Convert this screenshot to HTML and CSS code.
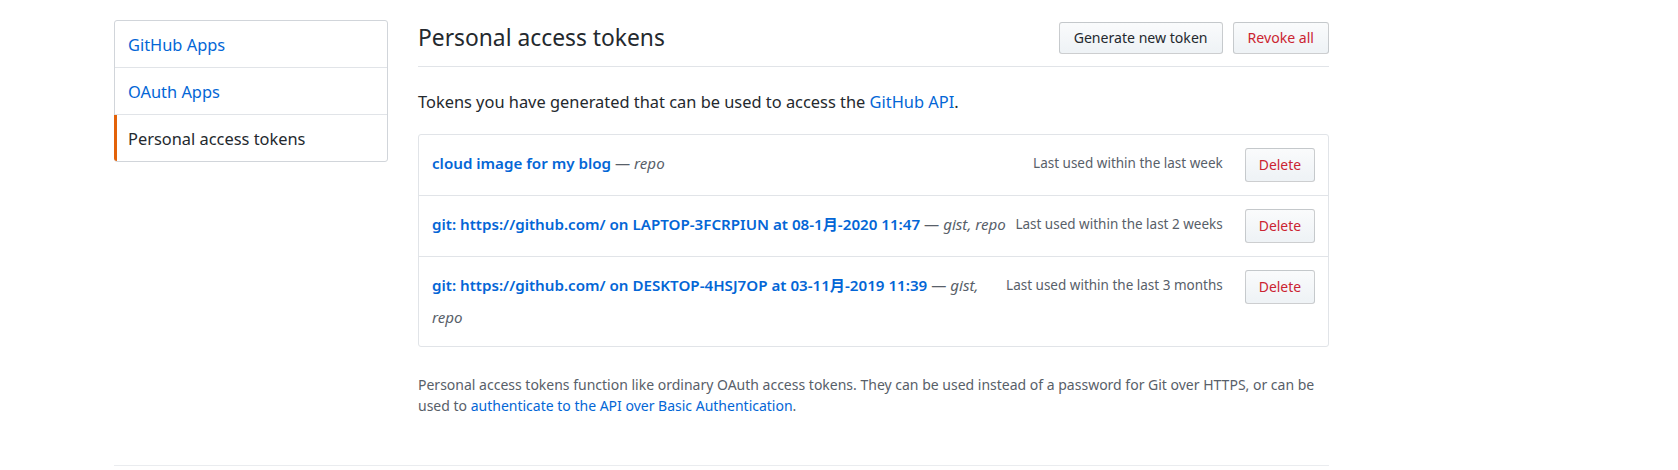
FILE: index.html
```html
<!DOCTYPE html>
<html lang="en">
<head>
<meta charset="utf-8">
<title>Personal access tokens</title>
<link rel="stylesheet" href="styles.css">
</head>
<body>
<div class="page">
  <div class="layout">
    <nav class="menu">
      <a class="menu-item" href="#">GitHub Apps</a>
      <a class="menu-item" href="#">OAuth Apps</a>
      <a class="menu-item selected" href="#">Personal access tokens</a>
    </nav>
    <main class="content">
      <div class="subhead">
        <h2 class="subhead-title">Personal access tokens</h2>
        <div class="subhead-actions">
          <button class="btn">Generate new token</button>
          <button class="btn btn-danger">Revoke all</button>
        </div>
      </div>
      <p class="intro">Tokens you have generated that can be used to access the <a href="#">GitHub API</a>.</p>
      <div class="token-list">
        <div class="token">
          <div class="token-desc"><a class="token-name" href="#">cloud image for my blog</a> <span class="token-scope">— <em>repo</em></span></div>
          <span class="token-used">Last used within the last week</span>
          <button class="btn btn-danger btn-delete">Delete</button>
        </div>
        <div class="token">
          <div class="token-desc"><a class="token-name" href="#">git: https://github.com/ on LAPTOP-3FCRPIUN at 08-1月-2020 11:47</a> <span class="token-scope">— <em>gist, repo</em></span></div>
          <span class="token-used">Last used within the last 2 weeks</span>
          <button class="btn btn-danger btn-delete">Delete</button>
        </div>
        <div class="token">
          <div class="token-desc"><a class="token-name" href="#">git: https://github.com/ on DESKTOP-4HSJ7OP at 03-11月-2019 11:39</a> <span class="token-scope">— <em>gist, repo</em></span></div>
          <span class="token-used">Last used within the last 3 months</span>
          <button class="btn btn-danger btn-delete">Delete</button>
        </div>
      </div>
      <p class="note">Personal access tokens function like ordinary OAuth access tokens. They can be used instead of a password for Git over HTTPS, or can be used to <a href="#">authenticate to the API over Basic Authentication</a>.</p>
    </main>
  </div>
  <div class="footer-rule"></div>
</div>
</body>
</html>
```
FILE: styles.css
```css
* { box-sizing: border-box; }

body {
  margin: 0;
  background: #fff;
  color: #24292e;
  font-family: "Noto Sans", "Noto Sans CJK SC", sans-serif;
}

a { color: #0366d6; text-decoration: none; }

.page {
  width: 1215px;
  margin-left: 114px;
  padding-top: 20px;
}

.layout {
  display: flex;
  gap: 30px;
  align-items: flex-start;
}

/* Sidebar menu */
.menu {
  width: 274px;
  flex: none;
  display: flex;
  flex-direction: column;
  border: 1px solid #d1d5da;
  border-radius: 3px;
}

.menu-item {
  position: relative;
  display: flex;
  align-items: center;
  height: 47px;
  padding-left: 13px;
  font-size: 16.4px;
  color: #0366d6;
  border-bottom: 1px solid #e1e4e8;
}

.menu-item:last-child { border-bottom: 0; height: 46px; }

.menu-item.selected { color: #24292e; }

.menu-item.selected::before {
  content: "";
  position: absolute;
  left: -1px;
  top: 0;
  bottom: 0;
  width: 3px;
  background: #e36209;
  border-bottom-left-radius: 3px;
}

/* Main content */
.content {
  width: 911px;
  flex: none;
}

.subhead {
  display: flex;
  align-items: center;
  justify-content: space-between;
  padding-top: 2px;
  padding-bottom: 12px;
  border-bottom: 1px solid #e1e4e8;
}

.subhead-title {
  margin: 0;
  font-size: 22.8px;
  font-weight: 400;
  line-height: 32px;
  color: #24292e;
}

.subhead-actions {
  display: flex;
  gap: 10px;
}

.btn {
  font-family: inherit;
  font-size: 14.1px;
  line-height: 18px;
  padding: 6px 14px;
  color: #24292e;
  background: linear-gradient(-180deg, #fafbfc 0%, #eff3f6 90%);
  border: 1px solid rgba(27, 31, 35, 0.2);
  border-radius: 3px;
  white-space: nowrap;
  cursor: pointer;
}

.btn-danger { color: #cb2431; }

.btn-delete {
  font-size: 13.9px;
  line-height: 20px;
  padding: 6px 13px;
  flex: none;
}

.intro {
  margin: 23px 0 20px;
  font-size: 16.4px;
  line-height: 24px;
}

/* Token list */
.token-list {
  border: 1px solid #e1e4e8;
  border-radius: 3px;
}

.token {
  display: flex;
  align-items: flex-start;
  padding: 13px;
  border-top: 1px solid #e1e4e8;
}

.token:first-child { border-top: 0; }

.token-desc {
  flex: 1;
  min-width: 0;
  font-size: 15.15px;
  line-height: 31.5px;
}

.token-name { font-weight: 600; }

.token-scope { color: #586069; }

.token-used {
  flex: none;
  margin-right: 22px;
  font-size: 13.5px;
  line-height: 31.5px;
  color: #586069;
  white-space: nowrap;
}

.note {
  margin: 28px 0 0;
  font-size: 14px;
  line-height: 20.7px;
  color: #586069;
}

.footer-rule {
  margin-top: 49px;
  border-top: 1px solid #eaecef;
}
```
